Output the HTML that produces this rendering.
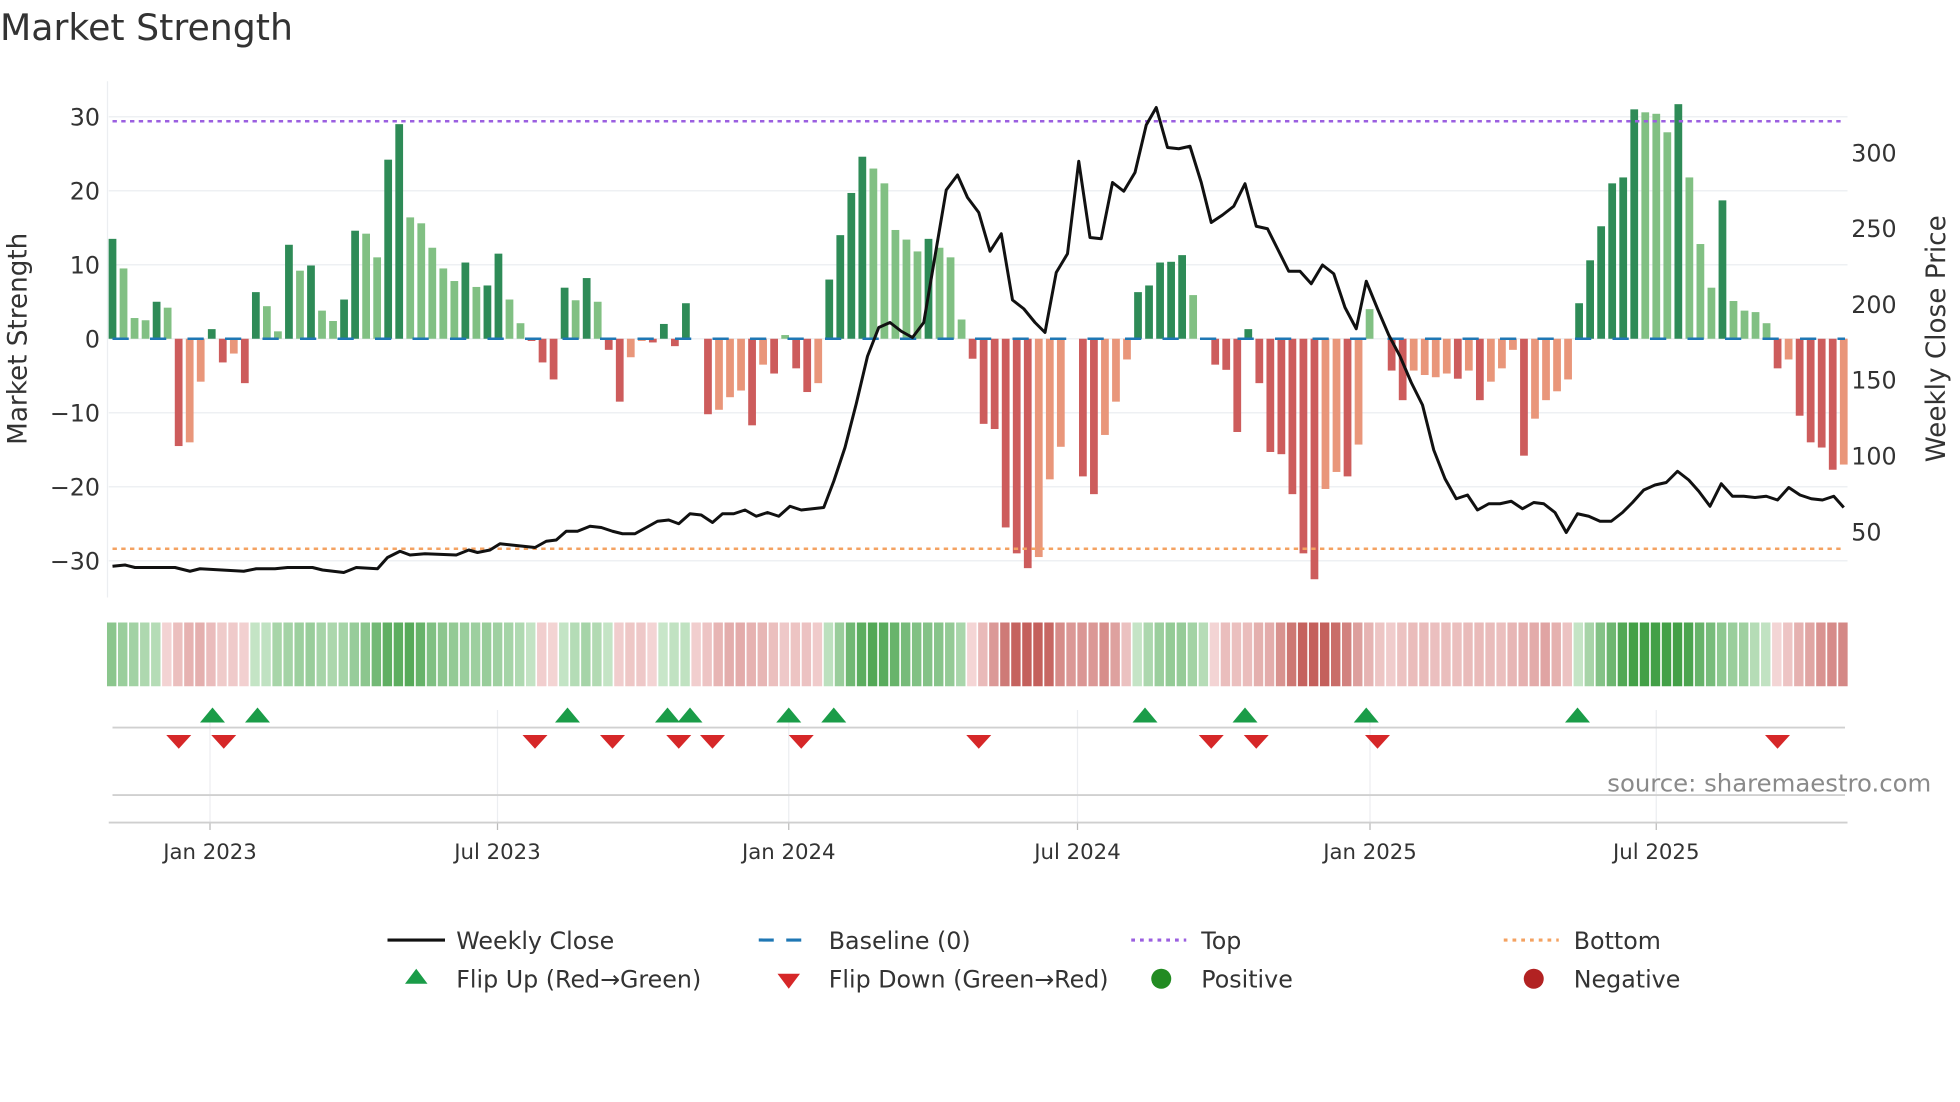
<!DOCTYPE html>
<html><head><meta charset="utf-8">
<style>
html,body{margin:0;padding:0;background:#fff;width:1960px;height:1102px;overflow:hidden}
svg{display:block}
text{font-family:"DejaVu Sans","Liberation Sans",sans-serif;fill:#333}
</style></head>
<body>
<svg id="s" width="1960" height="1102" viewBox="0 0 1568 881.6" xmlns="http://www.w3.org/2000/svg">
<text x="0" y="32" font-size="29">Market Strength</text>
<g id="grid"></g>
<g id="bars"></g>
<g id="heat"></g>
<g id="mk"></g>
<text transform="translate(21,271) rotate(-90)" text-anchor="middle" font-size="21">Market Strength</text>
<text transform="translate(1556,271) rotate(-90)" text-anchor="middle" font-size="21">Weekly Close Price</text>
<text x="1545" y="633" text-anchor="end" font-size="19.5" style="fill:#8a8a8a">source: sharemaestro.com</text>
<g font-size="19">
<line x1="310" y1="752" x2="356" y2="752" stroke="#111" stroke-width="2.5"/>
<text x="365" y="759">Weekly Close</text>
<line x1="607" y1="752" x2="651" y2="752" stroke="#1f77b4" stroke-width="2.5" stroke-dasharray="12,10"/>
<text x="663" y="759">Baseline (0)</text>
<line x1="905" y1="752" x2="949" y2="752" stroke="#9b5fe0" stroke-width="2.5" stroke-dasharray="3,4"/>
<text x="961" y="759">Top</text>
<line x1="1203" y1="752" x2="1247" y2="752" stroke="#f4a261" stroke-width="2.5" stroke-dasharray="3,4"/>
<text x="1259" y="759">Bottom</text>
<polygon points="333,775 342,787 324,787" fill="#1a9c48"/>
<text x="365" y="790">Flip Up (Red→Green)</text>
<polygon points="622,779 640,779 631,791" fill="#d62728"/>
<text x="663" y="790">Flip Down (Green→Red)</text>
<circle cx="929" cy="783" r="8" fill="#228b22"/>
<text x="961" y="790">Positive</text>
<circle cx="1227" cy="783" r="8" fill="#b22222"/>
<text x="1259" y="790">Negative</text>
</g>
</svg>
<script>
var NS="http://www.w3.org/2000/svg";
function el(p,t,a){var e=document.createElementNS(NS,t);for(var k in a)e.setAttribute(k,a[k]);p.appendChild(e);return e;}
var g=document.getElementById('grid'),b=document.getElementById('bars'),h=document.getElementById('heat'),m=document.getElementById('mk');
var Y0=271,PU=5.92;
function yv(v){return Y0-v*PU;}
[30,20,10,0,-10,-20,-30].forEach(function(v){
 el(g,'line',{x1:87,x2:1478,y1:yv(v),y2:yv(v),stroke:'#eef0f3','stroke-width':1.2});
 var t=el(g,'text',{x:80,y:yv(v)+7,'text-anchor':'end','font-size':19});t.textContent=(v<0?'\u2212'+(-v):v);
});
[300,250,200,150,100,50].forEach(function(p){
 var y=122+(300-p)*1.213;
 var t=el(g,'text',{x:1481,y:y+7,'font-size':19});t.textContent=p;
});
el(g,'line',{x1:86,x2:86,y1:65,y2:478,stroke:'#eceef1','stroke-width':1});
var S="13.5d,9.5l,2.8l,2.5l,5d,4.2l,-14.5d,-14l,-5.8l,1.3d,-3.2d,-2l,-6d,6.3d,4.4l,1l,12.7d,9.2l,9.9d,3.8l,2.4l,5.3d,14.6d,14.2l,11l,24.2d,29d,16.4l,15.6l,12.3l,9.5l,7.8l,10.3d,7l,7.2d,11.5d,5.3l,2.1l,-0.3d,-3.2d,-5.5d,6.9d,5.2l,8.2d,5l,-1.5d,-8.5d,-2.5l,-0.3l,-0.5d,2d,-1d,4.8d,0l,-10.2d,-9.6l,-7.9l,-7l,-11.7d,-3.5l,-4.7d,0.5l,-4d,-7.2d,-6l,8d,14d,19.7d,24.6d,23l,21l,14.7l,13.4l,11.8l,13.5d,12.3l,11l,2.6l,-2.7d,-11.5d,-12.2d,-25.5d,-29d,-31d,-29.5l,-19l,-14.6l,0l,-18.6d,-21d,-13l,-8.5l,-2.8l,6.3d,7.2d,10.3d,10.4d,11.3d,5.9l,0l,-3.5d,-4.2d,-12.6d,1.3d,-6d,-15.3d,-15.6d,-21d,-29d,-32.5d,-20.3l,-18l,-18.6d,-14.3l,4l,0l,-4.3d,-8.3d,-4.3l,-4.9l,-5.2l,-4.7l,-5.4d,-4.3l,-8.3d,-5.8l,-4l,-1.5l,-15.8d,-10.8l,-8.3l,-7.1l,-5.5l,4.8d,10.6d,15.2d,21d,21.8d,31d,30.6l,30.4l,27.9l,31.7d,21.8l,12.8l,6.9l,18.7d,5.1l,3.8l,3.6l,2.1l,-4d,-2.8l,-10.4d,-14d,-14.7d,-17.7d,-17l".split(',');
var n=S.length,x0=90,x1=1475,step=(x1-x0)/(n-1),w=6.2;
var vals=[];
S.forEach(function(s,i){
 var v=parseFloat(s),d=s.slice(-1)=='d';vals.push(v);
 var x=x0+i*step;
 var col=v>=0?(d?'#2e8b57':'#81c083'):(d?'#cd5c5c':'#e9967a');
 if(v!==0)el(b,'rect',{x:x-w/2,y:Math.min(yv(v),Y0),width:w,height:Math.abs(v*PU),fill:col});
});
el(b,'line',{x1:90,x2:1476,y1:Y0,y2:Y0,stroke:'#1f77b4','stroke-width':2,'stroke-dasharray':'13,17'});
el(b,'line',{x1:90,x2:1476,y1:97,y2:97,stroke:'#9b5fe0','stroke-width':2,'stroke-dasharray':'3.5,3.5'});
el(b,'line',{x1:90,x2:1476,y1:439,y2:439,stroke:'#f4a261','stroke-width':2,'stroke-dasharray':'3.5,3.5'});
var P="90,453 100,452 108,454 140,454 152,457 160,455 195,457 205,455 220,455 230,454 250,454 258,456 275,458 285,454 302,455 310,446 320,441 328,444 340,443 365,444 375,440 382,442 392,440 400,435 428,438 437,433 445,432 453,425 462,425 472,421 481,422 490,425 498,427 508,427 517,422 526,417 535,416 543,419 552,411 561,412 570,418 578,411 587,411 596,408 605,413 614,410 623,413 632,405 641,408 659,406 667,385 676,358 685,323 694,285 703,262 712,258 721,265 730,270 739,258 748,205 757,152 766,140 774,158 783,170 792,201 801,187 810,240 819,247 828,258 836,266 845,218 854,203 863,129 872,190 881,191 890,146 899,153 908,138 917,100 925,86 934,118 943,119 952,117 961,146 969,178 978,172 987,165 996,147 1005,181 1014,183 1022,199 1031,217 1040,217 1049,227 1058,212 1067,219 1076,246 1085,263 1093,225 1102,247 1111,268 1120,285 1129,306 1138,324 1147,360 1156,383 1165,399 1174,396 1182,408 1191,403 1200,403 1209,401 1218,407 1227,402 1235,403 1244,410 1253,426 1262,411 1271,413 1280,417 1289,417 1298,410 1306,402 1315,392 1324,388 1333,386 1342,377 1351,384 1359,393 1368,405 1377,387 1386,397 1395,397 1404,398 1413,397 1422,400 1431,390 1440,396 1449,399 1458,400 1467,397 1475,406";
el(b,'polyline',{points:P,fill:'none',stroke:'#111','stroke-width':2.4,'stroke-linejoin':'round'});
function mix(a,c,t){return 'rgb('+[0,1,2].map(function(k){return Math.round(a[k]+(c[k]-a[k])*t)}).join(',')+')';}
var hw=step;
for(var i=0;i<n;i++){
 var s=0,c=0;for(var j=i-2;j<=i+1;j++){if(j>=0&&j<n){s+=vals[j];c++;}}
 var a=s/c;var col;
 if(a>=0){var t=Math.min(1,a/25);col=mix([200,230,201],[67,160,71],t);}
 else{var t=Math.min(1,-a/25);col=mix([244,214,214],[196,96,92],t);}
 el(h,'rect',{x:x0+i*step-hw/2,y:498,width:hw-1.3,height:51,fill:col});
}
[168,398,631,862,1096,1325].forEach(function(x,k){
 el(m,'line',{x1:x,x2:x,y1:568,y2:658,stroke:'#eceef1','stroke-width':1});
 el(m,'line',{x1:x,x2:x,y1:658,y2:664,stroke:'#bbb','stroke-width':1});
 var t=el(m,'text',{x:x,y:687,'text-anchor':'middle','font-size':17});t.textContent=['Jan 2023','Jul 2023','Jan 2024','Jul 2024','Jan 2025','Jul 2025'][k];
});
el(m,'line',{x1:90,x2:1476,y1:582,y2:582,stroke:'#d0d0d0','stroke-width':1.5});
el(m,'line',{x1:90,x2:1476,y1:636,y2:636,stroke:'#d0d0d0','stroke-width':1.5});
el(m,'line',{x1:87,x2:1478,y1:658,y2:658,stroke:'#cfcfcf','stroke-width':1.5});
[170,206,454,534,552,631,667,916,996,1093,1262].forEach(function(x){
 el(m,'polygon',{points:(x)+',566 '+(x+10)+',578 '+(x-10)+',578',fill:'#1a9c48'});
});
[143,179,428,490,543,570,641,783,969,1005,1102,1422].forEach(function(x){
 el(m,'polygon',{points:(x-10)+',588 '+(x+10)+',588 '+x+',599',fill:'#d62728'});
});
</script>
</body></html>
